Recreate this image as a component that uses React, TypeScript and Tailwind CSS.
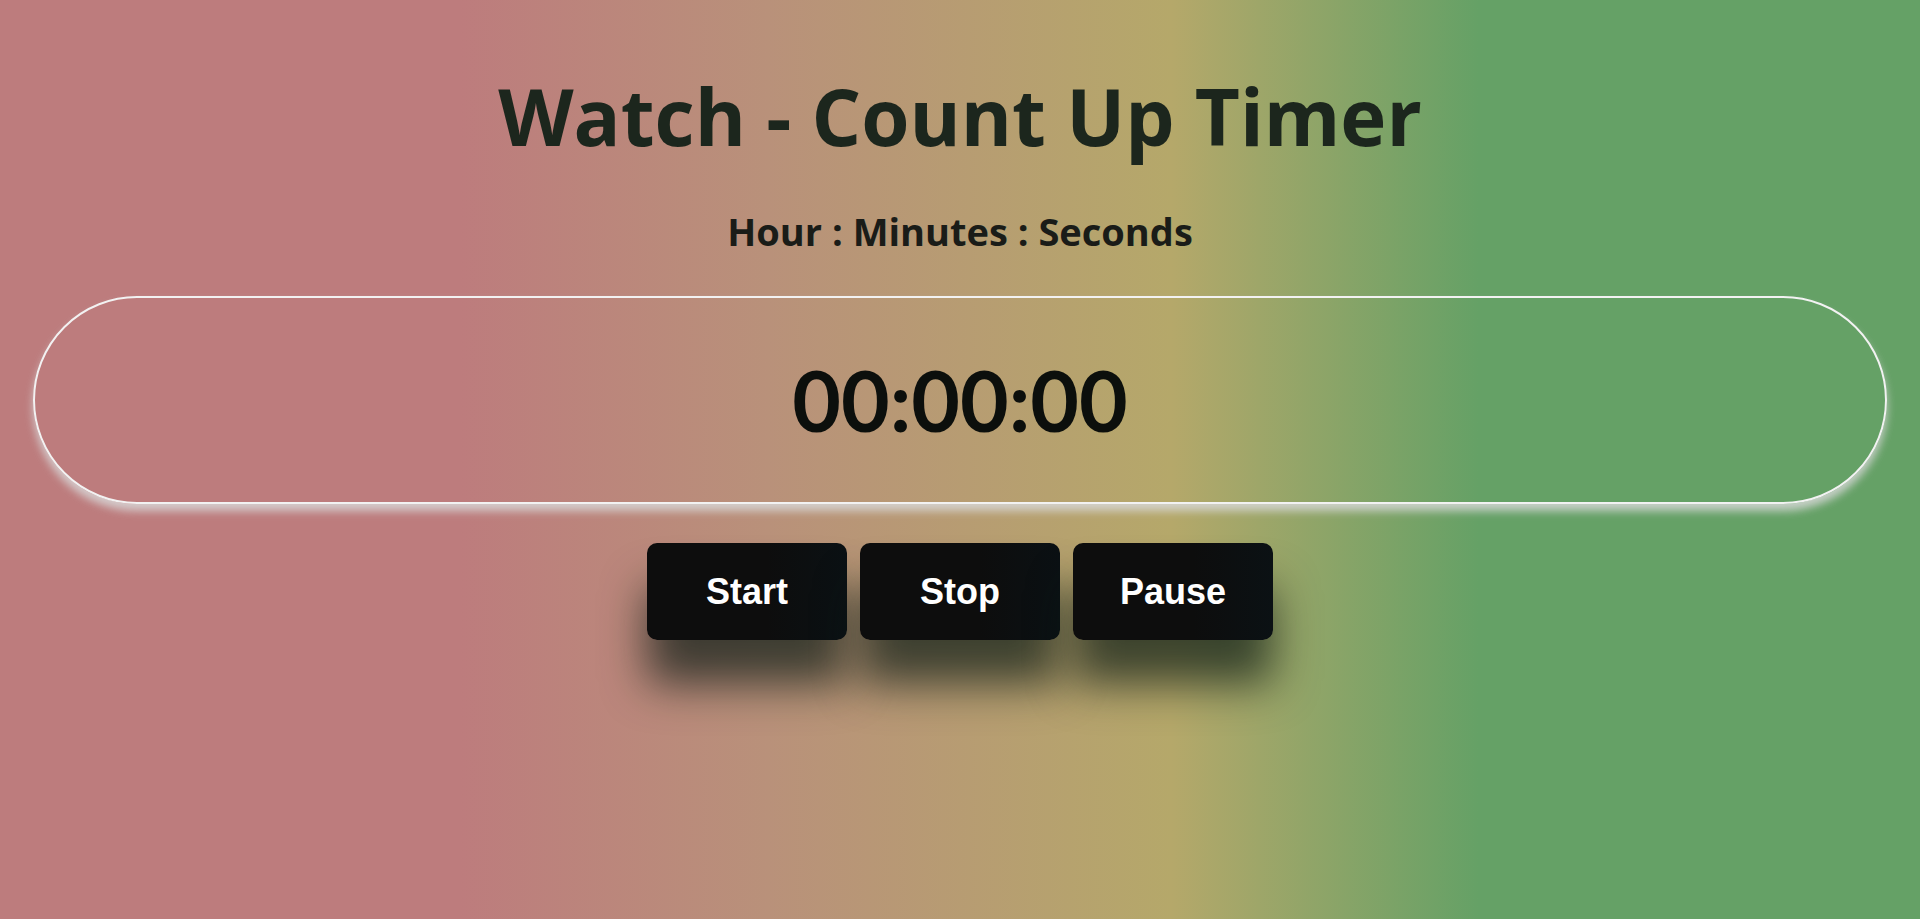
import React from "react";

export default function App() {
  return (
    <div className="min-h-[919px] w-full bg-[linear-gradient(to_right,#bd7c7d_0%,#bd7c7d_24%,#b9917a_40%,#b5a86a_61%,#65a166_77%,#65a166_100%)] flex flex-col items-center">
      <h1 className="mt-[68px] text-[78px] leading-[96px] font-bold text-[#1c261d] [font-family:'Comic_Sans_MS','Open_Sans',sans-serif]">
        Watch - Count Up Timer
      </h1>
      <p className="mt-[44px] text-[38px] leading-[46px] font-bold text-[#1a1c18] [font-family:'Comic_Sans_MS','Open_Sans',sans-serif]">
        Hour : Minutes : Seconds
      </p>
      <div className="mt-[42px] self-stretch mx-[33px] h-[208px] rounded-full border-2 border-[#f2f2f2] shadow-[0_7px_8px_rgba(215,215,215,0.85)] flex items-center justify-center">
        <span className="text-[84px] leading-none font-bold text-[#0c0f0c] [font-family:Lato,sans-serif]">
          00:00:00
        </span>
      </div>
      <div className="mt-[39px] flex gap-[13px]">
        {["Start", "Stop", "Pause"].map((t) => (
          <button
            key={t}
            className="w-[200px] h-[97px] rounded-[10px] bg-[linear-gradient(to_right,#0d0d0d_60%,#0b1114_100%)] text-white text-[36px] font-bold shadow-[0_44px_44px_rgba(10,25,20,0.7)] [font-family:'Liberation_Sans',Arial,sans-serif]"
          >
            {t}
          </button>
        ))}
      </div>
    </div>
  );
}
